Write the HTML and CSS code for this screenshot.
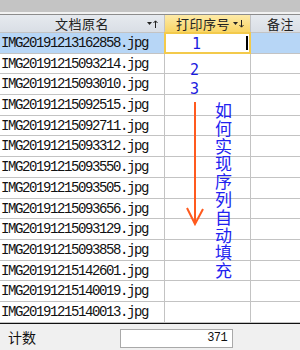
FILE: index.html
```html
<!DOCTYPE html>
<html lang="zh-CN">
<head>
    <meta charset="UTF-8">
    <title>打印序号</title>
    <link rel="stylesheet" href="styles.css">
</head>
<body>
    <div class="sheet">
        <div class="topbar"></div>
        <div class="grid">
            <div class="hd">文档原名
                <svg class="sort" width="11" height="8" viewBox="0 0 11 8"><path d="M0 2h5L2.5 5z" fill="#222"/><path d="M8.5 1v7M6.5 3l2-2.2 2 2.2" stroke="#222" fill="none"/></svg>
            </div>
            <div class="hd hd-on">打印序号
                <svg class="sort" width="11" height="8" viewBox="0 0 11 8"><path d="M0 2h5L2.5 5z" fill="#222"/><path d="M8.5 0v7M6.5 5l2 2.2 2-2.2" stroke="#222" fill="none"/></svg>
            </div>
            <div class="hd hd-last">备注</div>

            <div class="cell sel">IMG20191213162858.jpg</div>
            <div class="cell edit"><span class="num">1</span><span class="caret"></span></div>
            <div class="cell sel last"></div>

            <div class="cell">IMG20191215093214.jpg</div><div class="cell"></div><div class="cell last"></div>
            <div class="cell">IMG20191215093010.jpg</div><div class="cell"></div><div class="cell last"></div>
            <div class="cell">IMG20191215092515.jpg</div><div class="cell"></div><div class="cell last"></div>
            <div class="cell">IMG20191215092711.jpg</div><div class="cell"></div><div class="cell last"></div>
            <div class="cell">IMG20191215093312.jpg</div><div class="cell"></div><div class="cell last"></div>
            <div class="cell">IMG20191215093550.jpg</div><div class="cell"></div><div class="cell last"></div>
            <div class="cell">IMG20191215093505.jpg</div><div class="cell"></div><div class="cell last"></div>
            <div class="cell">IMG20191215093656.jpg</div><div class="cell"></div><div class="cell last"></div>
            <div class="cell">IMG20191215093129.jpg</div><div class="cell"></div><div class="cell last"></div>
            <div class="cell">IMG20191215093858.jpg</div><div class="cell"></div><div class="cell last"></div>
            <div class="cell">IMG20191215142601.jpg</div><div class="cell"></div><div class="cell last"></div>
            <div class="cell">IMG20191215140019.jpg</div><div class="cell"></div><div class="cell last"></div>
            <div class="cell">IMG20191215140013.jpg</div><div class="cell"></div><div class="cell last"></div>
        </div>

        <!-- hand-drawn notes over the sheet -->
        <div class="note n2">2</div>
        <div class="note n3">3</div>
        <svg class="arrow" width="24" height="128" viewBox="0 0 24 128">
            <path d="M10 0V122M2 106l8 16 8-15" stroke="#ff5a1e" stroke-width="2" fill="none"/>
        </svg>
        <div class="vtext">如何实现序列自动填充</div>

        <div class="footer">
            <span class="label">计数</span>
            <div class="count">371</div>
        </div>
    </div>
</body>
</html>
```

FILE: styles.css
```css
body {
    margin: 0;
    width: 300px;
    height: 350px;
    overflow: hidden;
    background: #fff;
    font-family: "Noto Sans CJK SC", "Noto Sans", sans-serif;
}

.sheet {
    position: relative;
    width: 300px;
    height: 350px;
    display: flex;
    flex-direction: column;
}

.topbar {
    height: 12px;
    background: #c4c4c4;
    border-bottom: 2px solid #f2f2f2;
}

.grid {
    display: grid;
    grid-template-columns: 165px 86px 1fr;
    grid-template-rows: 18px repeat(14, 20.7px);
    border-top: 1px solid #8c8c8c;
}

.hd {
    position: relative;
    background: linear-gradient(#e6eaef, #d9dee5);
    border-right: 1px solid #c3c3c3;
    border-bottom: 1px solid #c3c3c3;
    font-size: 13px;
    letter-spacing: 0.5px;
    line-height: 17px;
    color: #222;
    text-align: center;
}

.hd-on {
    background: linear-gradient(#fdeaa8, #f9d565);
    text-align: left;
    padding-left: 11px;
}

.hd-last {
    border-right: none;
    text-align: right;
    padding-right: 6px;
}

.sort {
    position: absolute;
    right: 6px;
    top: 5px;
}

.cell {
    border-right: 1px solid #c3c3c3;
    border-bottom: 1px solid #c3c3c3;
    font-family: "Liberation Mono", monospace;
    font-size: 14px;
    letter-spacing: -1.4px;
    line-height: 20px;
    padding-left: 1px;
    color: #111;
    white-space: nowrap;
    overflow: hidden;
}

.cell.last {
    border-right: none;
}

.sel {
    background: #b7d6f6;
}

.edit {
    position: relative;
    border: 2px solid #f3ca4b;
    margin: -1px 0 0 -1px;
    background: #fff;
}

.num {
    display: block;
    font-family: "DejaVu Sans Mono", monospace;
    font-size: 15px;
    letter-spacing: 0;
    color: #1a1ae0;
    padding-left: 25px;
}

.caret {
    position: absolute;
    right: 1px;
    top: 2px;
    width: 2px;
    height: 14px;
    background: #000;
}

.note {
    position: absolute;
    font-family: "DejaVu Sans Mono", monospace;
    font-size: 15px;
    color: #1a1ae0;
    line-height: 18px;
}

.n2 {
    left: 190px;
    top: 61px;
}

.n3 {
    left: 190px;
    top: 80px;
}

.arrow {
    position: absolute;
    left: 185px;
    top: 102px;
}

.vtext {
    position: absolute;
    left: 215px;
    top: 101px;
    width: 18px;
    font-size: 17px;
    line-height: 17.8px;
    color: #2222f0;
}

.footer {
    flex: 1;
    display: flex;
    align-items: center;
    border-top: 1px solid #111;
    background: #f0f0f0;
    padding: 0 0 0 8px;
}

.label {
    width: 112px;
    font-size: 14px;
    color: #111;
}

.count {
    width: 106px;
    height: 17px;
    margin-top: 4px;
    border: 1px solid #a9a9a9;
    background: #fff;
    text-align: right;
    padding-right: 5px;
    font-family: "Liberation Mono", monospace;
    font-size: 12px;
    letter-spacing: -0.6px;
    line-height: 17px;
    color: #111;
}
```
